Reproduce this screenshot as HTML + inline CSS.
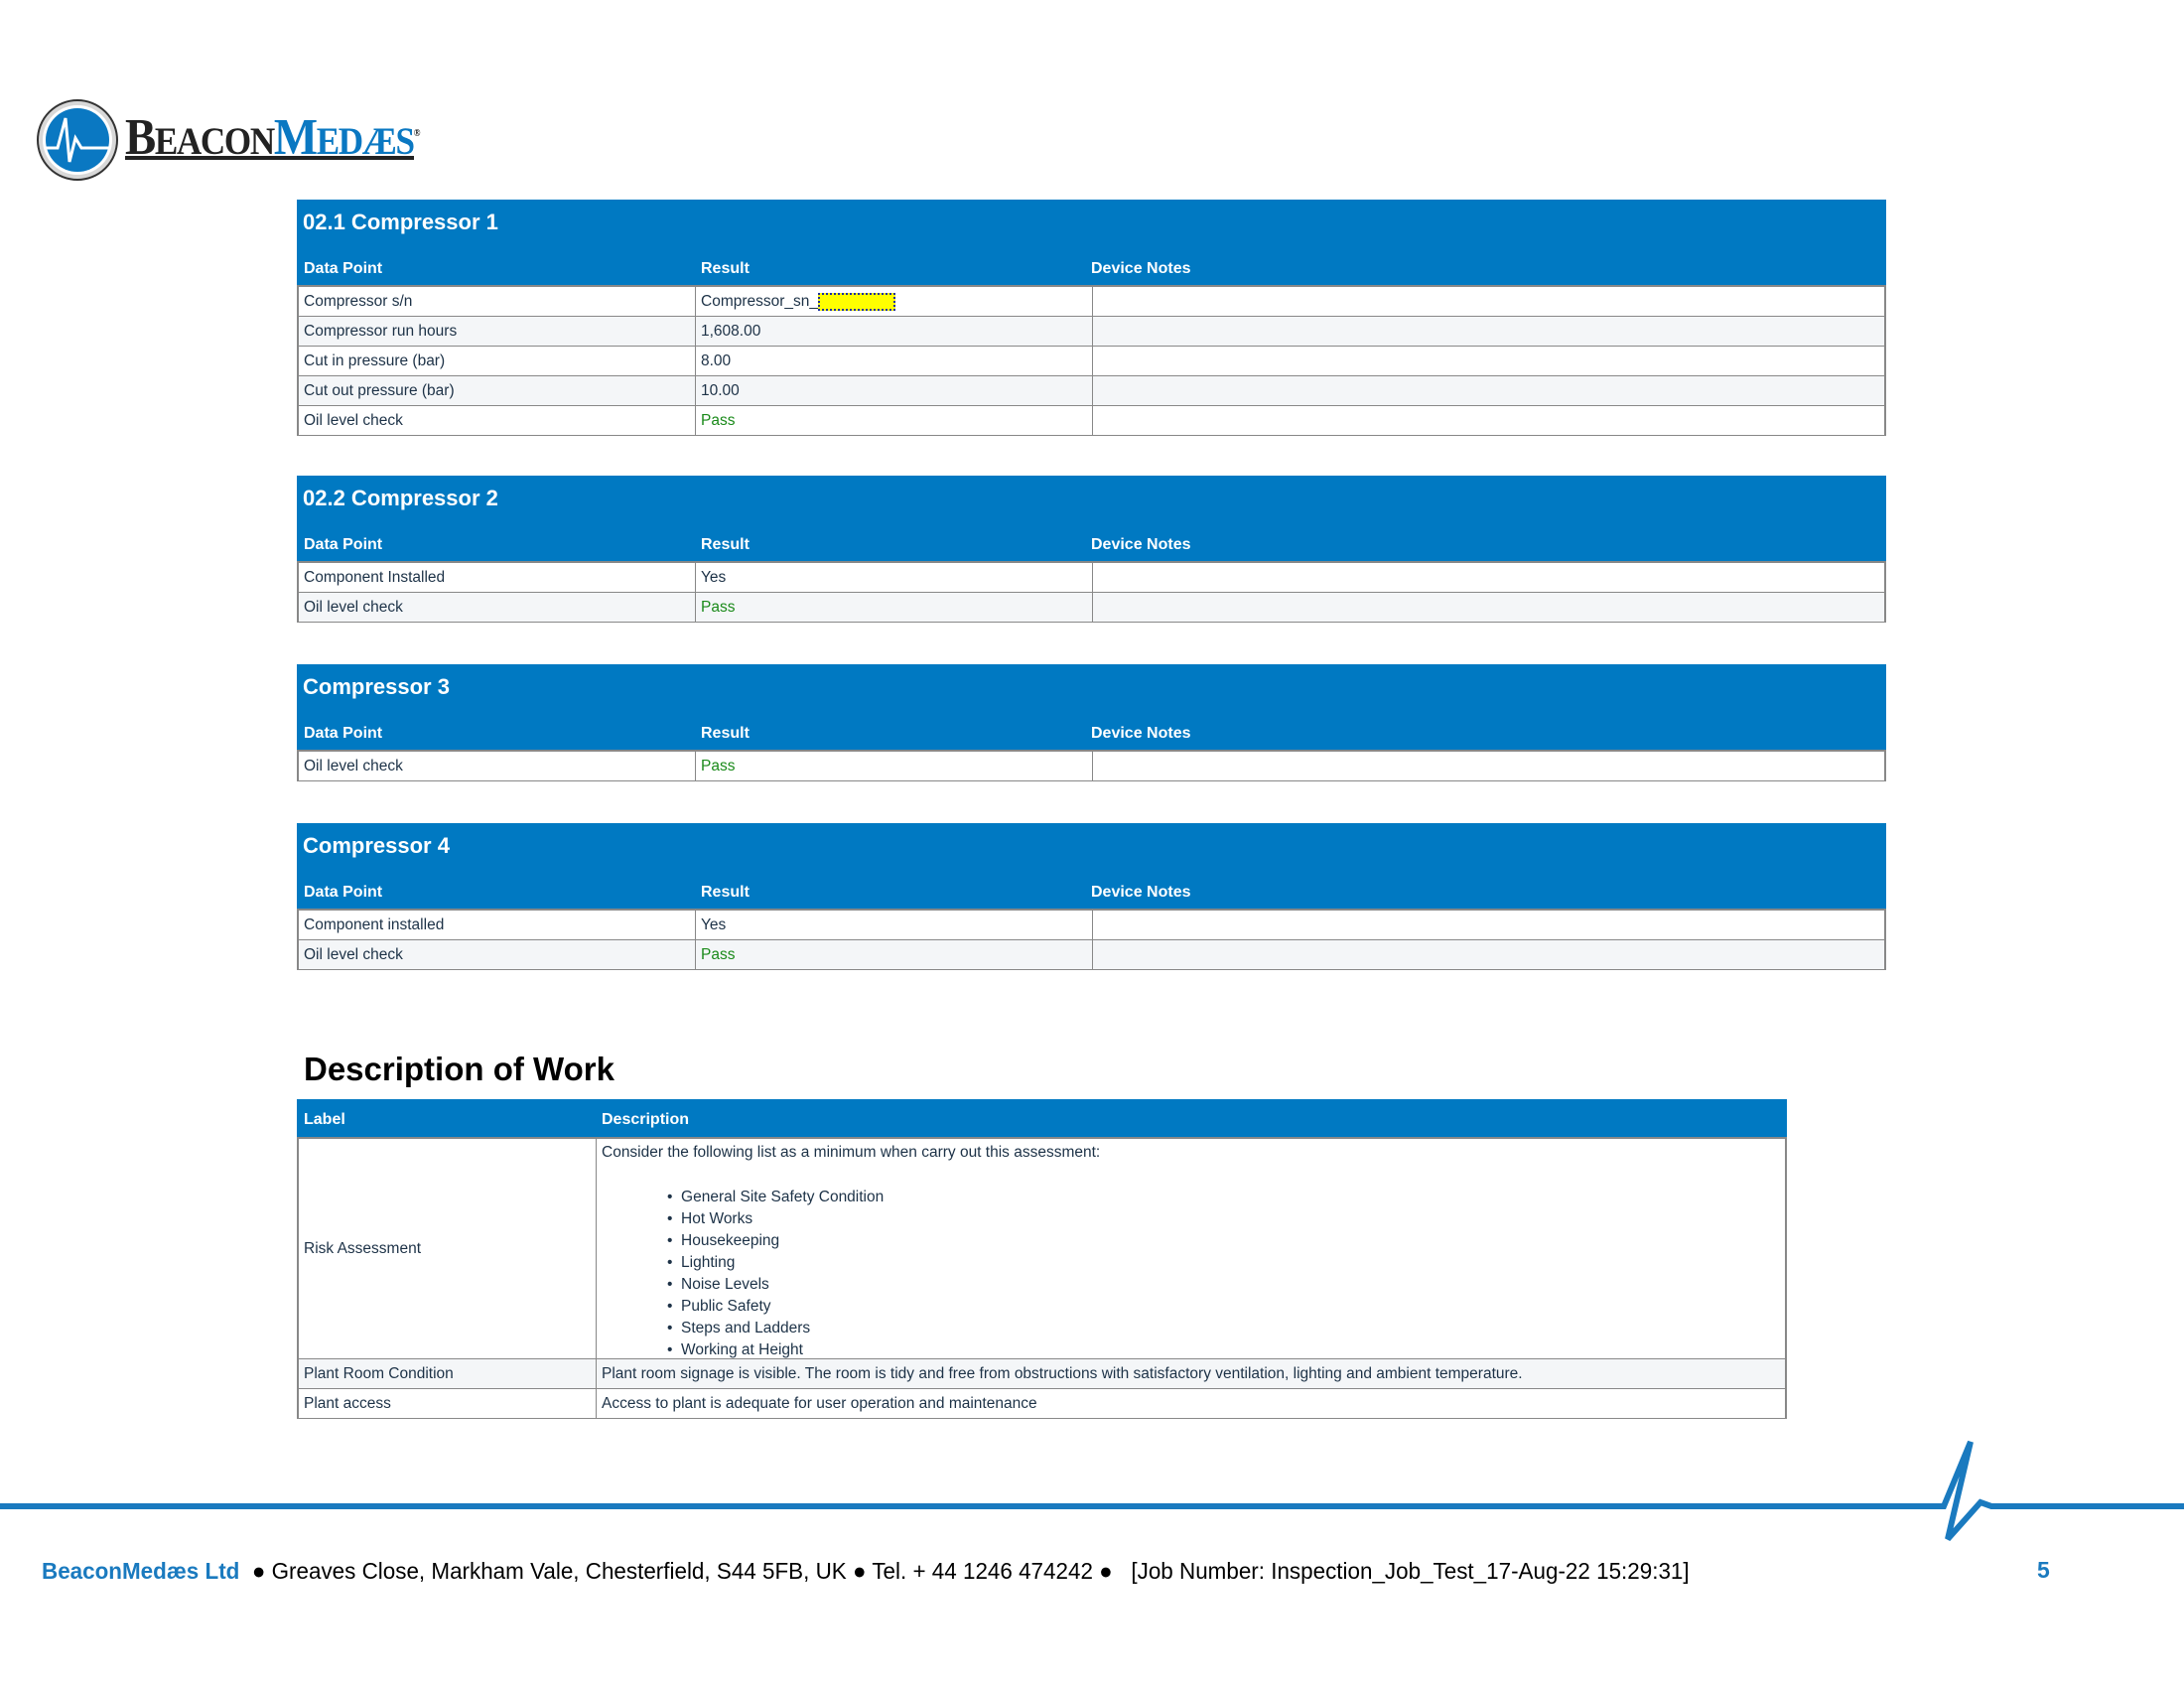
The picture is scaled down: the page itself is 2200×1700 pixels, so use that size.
<!DOCTYPE html>
<html><head><meta charset="utf-8"><style>
*{margin:0;padding:0;box-sizing:border-box}
body{width:2200px;height:1700px;background:#fff;position:relative;overflow:hidden;font-family:"Liberation Sans",sans-serif;color:#1d3247}
.abs{position:absolute}
.tbl{position:absolute;left:299px;width:1601px}
.tbl .title{background:#0079c2;color:#fff;font-weight:bold;font-size:22px;height:50px;padding:10px 6px}
.tbl .hdr{background:#0079c2;color:#fff;font-weight:bold;font-size:16px;height:38px;display:flex;align-items:center;border-bottom:2px solid #888;padding-top:3px}
.row{display:flex;height:30px;border-left:2px solid #888;border-right:2px solid #888;border-bottom:1.5px solid #888;font-size:15.5px;align-items:center}
.c1{width:400px;padding-left:5px;height:100%;display:flex;align-items:center;border-right:1.5px solid #888}
.c2{width:400px;padding-left:5px;height:100%;display:flex;align-items:center;border-right:1.5px solid #888}
.c3{flex:1}
.hdr .c1,.hdr .c2{border:none;padding-left:7px}
.pass{color:#1a8a1a}
</style></head><body>

<svg class="abs" style="left:36px;top:99px" width="84" height="84" viewBox="0 0 84 84">
<circle cx="42" cy="42" r="40" fill="#d8d8d8" stroke="#333" stroke-width="2"/>
<circle cx="42" cy="42" r="35" fill="#fff"/>
<circle cx="42" cy="42" r="32" fill="#0a78c2"/>
<path d="M10 50 H22 L30 20 L34 64 L40 40 L46 50 H74" fill="none" stroke="#fff" stroke-width="3"/>
</svg>
<div class="abs" style="left:126px;top:112px;font-family:'Liberation Serif',serif;font-weight:bold;font-size:52px;line-height:46px;letter-spacing:-1.5px;transform:scaleX(0.9);transform-origin:left;white-space:nowrap"><span style="color:#222">B<span style="font-size:39px">EACON</span></span><span style="color:#0a78c2">M<span style="font-size:39px">EDÆS</span></span><sup style="font-size:10px;color:#222">®</sup></div>
<div class="abs" style="left:126px;top:157px;width:291px;height:4px;background:#222"></div>

<div class="tbl" style="top:201px">
<div class="title">02.1 Compressor 1</div>
<div class="hdr"><div class="c1">Data Point</div><div class="c2">Result</div><div class="c3">Device Notes</div></div>
<div>
<div class="row" style="background:#fff"><div class="c1">Compressor s/n</div><div class="c2">Compressor_sn_<span style="display:inline-block;width:78px;height:18px;background:#ffff00;border:2px dotted #1b2fa0"></span></div><div class="c3"></div></div>
<div class="row" style="background:#f4f6f8"><div class="c1">Compressor run hours</div><div class="c2">1,608.00</div><div class="c3"></div></div>
<div class="row" style="background:#fff"><div class="c1">Cut in pressure (bar)</div><div class="c2">8.00</div><div class="c3"></div></div>
<div class="row" style="background:#f4f6f8"><div class="c1">Cut out pressure (bar)</div><div class="c2">10.00</div><div class="c3"></div></div>
<div class="row" style="background:#fff"><div class="c1">Oil level check</div><div class="c2 pass">Pass</div><div class="c3"></div></div>
</div></div>

<div class="tbl" style="top:479px">
<div class="title">02.2 Compressor 2</div>
<div class="hdr"><div class="c1">Data Point</div><div class="c2">Result</div><div class="c3">Device Notes</div></div>
<div class="row" style="background:#fff"><div class="c1">Component Installed</div><div class="c2">Yes</div><div class="c3"></div></div>
<div class="row" style="background:#f4f6f8"><div class="c1">Oil level check</div><div class="c2 pass">Pass</div><div class="c3"></div></div>
</div>

<div class="tbl" style="top:669px">
<div class="title">Compressor 3</div>
<div class="hdr"><div class="c1">Data Point</div><div class="c2">Result</div><div class="c3">Device Notes</div></div>
<div class="row" style="background:#fff"><div class="c1">Oil level check</div><div class="c2 pass">Pass</div><div class="c3"></div></div>
</div>

<div class="tbl" style="top:829px">
<div class="title">Compressor 4</div>
<div class="hdr"><div class="c1">Data Point</div><div class="c2">Result</div><div class="c3">Device Notes</div></div>
<div class="row" style="background:#fff"><div class="c1">Component installed</div><div class="c2">Yes</div><div class="c3"></div></div>
<div class="row" style="background:#f4f6f8"><div class="c1">Oil level check</div><div class="c2 pass">Pass</div><div class="c3"></div></div>
</div>

<div class="abs" style="left:306px;top:1058px;font-size:33px;font-weight:bold;color:#000">Description of Work</div>

<div class="abs" style="left:299px;top:1107px;width:1501px">
<div style="background:#0079c2;color:#fff;font-weight:bold;font-size:16px;height:40px;display:flex;align-items:center;border-bottom:2px solid #888;padding-top:3px"><div style="width:300px;padding-left:7px">Label</div><div style="padding-left:7px">Description</div></div>
<div style="display:flex;height:222px;border-left:2px solid #888;border-right:2px solid #888;border-bottom:1.5px solid #888;font-size:15.5px">
<div style="width:300px;padding-left:5px;border-right:1.5px solid #888;display:flex;align-items:center">Risk Assessment</div>
<div style="padding-left:5px;padding-top:3px;line-height:22px">Consider the following list as a minimum when carry out this assessment:
<div style="margin-top:23px;padding-left:66px">
<div>•&nbsp;&nbsp;General Site Safety Condition</div><div>•&nbsp;&nbsp;Hot Works</div><div>•&nbsp;&nbsp;Housekeeping</div><div>•&nbsp;&nbsp;Lighting</div><div>•&nbsp;&nbsp;Noise Levels</div><div>•&nbsp;&nbsp;Public Safety</div><div>•&nbsp;&nbsp;Steps and Ladders</div><div>•&nbsp;&nbsp;Working at Height</div></div></div></div>
<div class="row" style="background:#f4f6f8"><div style="width:300px;padding-left:5px;height:100%;display:flex;align-items:center;border-right:1.5px solid #888">Plant Room Condition</div><div style="padding-left:5px">Plant room signage is visible. The room is tidy and free from obstructions with satisfactory ventilation, lighting and ambient temperature.</div></div>
<div class="row" style="background:#fff"><div style="width:300px;padding-left:5px;height:100%;display:flex;align-items:center;border-right:1.5px solid #888">Plant access</div><div style="padding-left:5px">Access to plant is adequate for user operation and maintenance</div></div>
</div>

<svg class="abs" style="left:0;top:1440px" width="2200" height="120" viewBox="0 0 2200 120">
<path d="M0 77 H1958 L1985 12 L1962 110 L1995 73 L2006 77 H2200" fill="none" stroke="#1a7abf" stroke-width="6"/>
</svg>

<div class="abs" style="left:42px;top:1569px;font-size:23px;color:#000;white-space:nowrap;transform:scaleX(0.975);transform-origin:left"><b style="color:#1a7abf">BeaconMedæs Ltd</b> &nbsp;● Greaves Close, Markham Vale, Chesterfield, S44 5FB, UK ● Tel. + 44 1246 474242 ● &nbsp; [Job Number: Inspection_Job_Test_17-Aug-22 15:29:31]</div>
<div class="abs" style="left:2052px;top:1568px;font-size:23px;color:#1a7abf;font-weight:bold">5</div>
</body></html>
